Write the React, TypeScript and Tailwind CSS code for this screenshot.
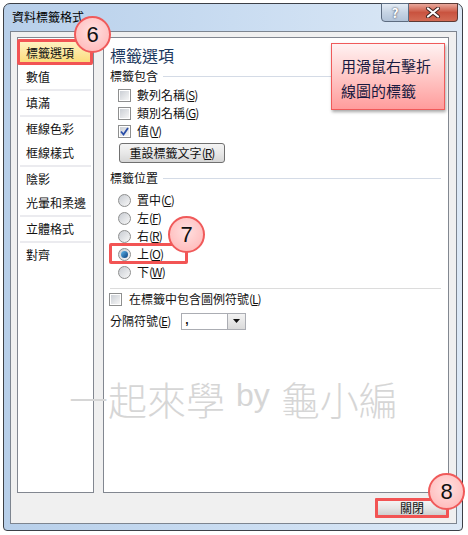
import React from "react"

const cjk = "font-['Noto_Sans_CJK_TC','Noto_Sans_CJK_SC',sans-serif]"

const groups = [
  ["標籤選項", "數值"],
  ["填滿"],
  ["框線色彩", "框線樣式"],
  ["陰影", "光暈和柔邊"],
  ["立體格式"],
  ["對齊"],
]

const Key = ({ k }: { k: string }) => (
  <span className="tracking-[-1px]">
    (<span className="underline underline-offset-1">{k}</span>)
  </span>
)

const Checkbox = ({ checked = false }: { checked?: boolean }) => (
  <div className="w-[13px] h-[13px] border border-[#8e8f8f] bg-white p-[1px] shrink-0">
    <div className="w-full h-full bg-gradient-to-br from-[#cbcfd5] to-[#f6f6f6] flex items-center justify-center">
      {checked && (
        <svg width="9" height="9" viewBox="0 0 9 9">
          <path d="M1 4.5 L3.5 7.5 L8 1" stroke="#2a4ea8" strokeWidth="1.8" fill="none" />
        </svg>
      )}
    </div>
  </div>
)

const Radio = ({ on = false }: { on?: boolean }) => (
  <div className="w-[13px] h-[13px] rounded-full border border-[#8e8f8f] bg-gradient-to-br from-[#c8ccd2] to-[#f8f8f8] flex items-center justify-center shrink-0">
    {on && <div className="w-[7px] h-[7px] rounded-full bg-gradient-to-br from-[#5fb8ee] to-[#0b3f7c]" />}
  </div>
)

const Step = ({ n, className }: { n: string; className: string }) => (
  <div
    className={`absolute w-[37px] h-[37px] rounded-full border-2 border-[#f05a5a] bg-[radial-gradient(circle_at_50%_40%,#ffe0e0,#ffb3b3)] flex items-center justify-center text-[22px] text-[#111] font-['Liberation_Sans',sans-serif] ${className}`}
  >
    {n}
  </div>
)

const Section = ({ label }: { label: string }) => (
  <div className="flex items-center h-[18px] pl-[6px] pr-[7px] gap-[5px]">
    <span>{label}</span>
    <div className="flex-1 h-px bg-[#d4dbe6]" />
  </div>
)

const App = () => {
  return (
    <div className={`relative w-[468px] h-[535px] bg-white text-[12px] text-[#111] ${cjk}`}>
      <div className="pt-[3px] pl-[3px]">
        <div className="relative w-[460px] h-[528px] rounded-t-[7px] rounded-b-[4px] border border-[#3c4047] bg-gradient-to-r from-[#b7cfea] via-[#c9dcf1] to-[#dde9f6] flex flex-col">
          {/* title bar */}
          <div className="h-[27px] flex items-start justify-between">
            <div className="pl-[8px] pt-[5px] leading-[16px] text-[12px] text-black">資料標籤格式</div>
            <div className="flex -mt-px mr-[4px]">
              <div className="w-[28px] h-[19px] rounded-bl-[4px] border border-[#5d6c80] bg-gradient-to-b from-[#e4ecf5] via-[#c6d4e4] to-[#b2c3d8] flex items-center justify-center text-[13px] font-bold text-white [text-shadow:0_0_2px_#223]">
                ?
              </div>
              <div className="w-[49px] h-[19px] rounded-br-[4px] border border-l-0 border-[#5d3a35] bg-gradient-to-b from-[#e8a79b] via-[#c9533f] to-[#d36b55] flex items-center justify-center">
                <svg width="16" height="11" viewBox="0 0 16 11">
                  <path d="M3 1.5 L13 9.5 M13 1.5 L3 9.5" stroke="#3a2220" strokeWidth="4" strokeLinecap="round" />
                  <path d="M3 1.5 L13 9.5 M13 1.5 L3 9.5" stroke="white" strokeWidth="2.2" strokeLinecap="round" />
                </svg>
              </div>
            </div>
          </div>

          {/* client */}
          <div className="flex-1 ml-[6px] mr-[5px] mb-[6px] border border-[#7d8590] bg-[#f0f0f0] flex flex-col pt-[5px] pl-[6px] pr-[7px]">
            <div className="flex h-[456px] gap-[9px]">
              {/* nav */}
              <div className="relative w-[77px] border border-[#828790] bg-white pt-[3px] px-px">
                {groups.map((g, gi) => (
                  <div key={gi}>
                    {gi > 0 && <div className="h-[2px] mx-[1px] bg-[#ebebef]" />}
                    {g.map((t) => (
                      <div
                        key={t}
                        className={`h-[24px] flex items-center pl-[7px] ${
                          t === "標籤選項" ? "bg-gradient-to-b from-[#fff3c4] to-[#fbd970]" : ""
                        }`}
                      >
                        {t}
                      </div>
                    ))}
                  </div>
                ))}
                <div className="absolute left-[-1px] top-[1px] w-[76px] h-[26px] border-[3px] border-[#f25454] rounded-[2px]" />
              </div>

              {/* options */}
              <div className="relative flex-1 border border-[#828790] bg-white">
                <div className="mt-[8px] h-[18px] pl-[6px] text-[16px] leading-[18px] text-[#1e3a60]">標籤選項</div>
                <div className="mt-[3px]">
                  <Section label="標籤包含" />
                </div>
                <div className="mt-px pl-[14px]">
                  {[
                    ["數列名稱", "S", false],
                    ["類別名稱", "G", false],
                    ["值", "V", true],
                  ].map(([t, k, c]) => (
                    <div key={t as string} className="h-[18px] flex items-center gap-[6px]">
                      <Checkbox checked={c as boolean} />
                      <span>
                        {t as string}
                        <Key k={k as string} />
                      </span>
                    </div>
                  ))}
                </div>
                <div className="mt-[3px] ml-[15px] w-[106px] h-[20px] rounded-[3px] border border-[#707070] bg-gradient-to-b from-[#f4f4f4] via-[#e8e8e8] to-[#d6d6d6] flex items-center justify-center">
                  重設標籤文字
                  <Key k="R" />
                </div>
                <div className="mt-[6px]">
                  <Section label="標籤位置" />
                </div>
                <div className="relative mt-[4px] pl-[14px]">
                  {[
                    ["置中", "C"],
                    ["左", "F"],
                    ["右", "R"],
                    ["上", "O"],
                    ["下", "W"],
                  ].map(([t, k]) => (
                    <div key={t} className="h-[18px] flex items-center gap-[6px]">
                      <Radio on={t === "上"} />
                      <span>
                        {t}
                        <Key k={k} />
                      </span>
                    </div>
                  ))}
                  <div className="absolute left-[5px] top-[52px] w-[79px] h-[21px] border-[3px] border-[#f25454] rounded-[2px]" />
                </div>
                <div className="mt-[7px] mx-[6px] mr-[7px] h-px bg-[#dcdcdc]" />
                <div className="mt-[1px] h-[18px] pl-[5px] flex items-center gap-[7px]">
                  <Checkbox />
                  <span>
                    在標籤中包含圖例符號
                    <Key k="L" />
                  </span>
                </div>
                <div className="mt-[4px] h-[18px] pl-[6px] flex items-center gap-[11px]">
                  <span>
                    分隔符號
                    <Key k="E" />
                  </span>
                  <div className="w-[65px] h-[17px] border border-[#abadb3] bg-white flex items-center justify-between">
                    <span className="pl-[3px] font-['Liberation_Sans',sans-serif] font-bold -mt-[3px]">,</span>
                    <div className="w-[18px] h-full border-l border-[#abadb3] bg-gradient-to-b from-[#f3f3f3] to-[#dadada] flex items-center justify-center">
                      <svg width="7" height="4" viewBox="0 0 7 4">
                        <path d="M0 0 H7 L3.5 4 Z" fill="#111" />
                      </svg>
                    </div>
                  </div>
                </div>

                {/* note */}
                <div className="absolute left-[227px] top-[5px] w-[114px] h-[67px] border border-[#f05a5a] bg-gradient-to-b from-[#fff2f2] to-[#ff9c9c] shadow-[1px_2px_3px_rgba(0,0,0,0.35)] pl-[9px] pt-[9px] text-[15px] leading-[25px] text-[#1a1a40]">
                  <div>用滑鼠右擊折</div>
                  <div>線圖的標籤</div>
                </div>
              </div>
            </div>

            {/* footer */}
            <div className="flex justify-end mt-[5px]">
              <div className="w-[74px] h-[20px] border-[3px] border-[#f25454] rounded-[1px] bg-gradient-to-b from-[#f4f4f4] via-[#e6e6e6] to-[#cfcfcf] flex items-center justify-center text-[12px] leading-none">
                關閉
              </div>
            </div>
          </div>
        </div>
      </div>

      {/* overlays */}
      <Step n="6" className="left-[74px] top-[16px]" />
      <Step n="7" className="left-[168px] top-[216px]" />
      <Step n="8" className="left-[428px] top-[473px]" />
      <div className="absolute left-[69px] top-[376px] flex items-center text-[39px] leading-[44px] font-light text-[#d6d6d6] whitespace-nowrap pointer-events-none">
        <span>一起來學</span>
        <span className="mx-[11px] font-['Liberation_Sans',sans-serif] text-[32px] -mt-[6px]">by</span>
        <span>龜小編</span>
      </div>
    </div>
  )
}

export default App
